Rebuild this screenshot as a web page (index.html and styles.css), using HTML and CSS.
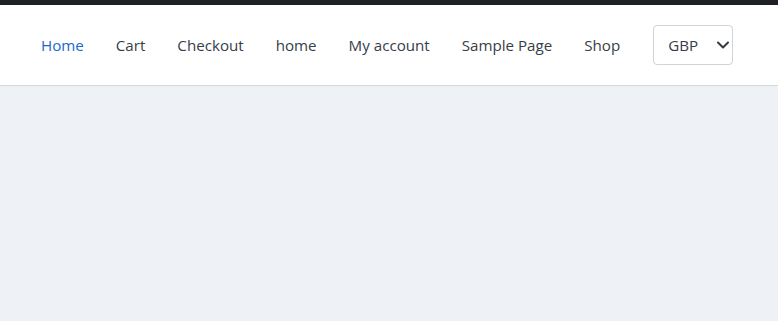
FILE: index.html
```html
<!DOCTYPE html>
<html>
<head>
<meta charset="utf-8">
<link rel="stylesheet" href="styles.css">
</head>
<body>
<div class="topbar"></div>
<header class="header">
  <nav class="nav">
    <a class="nav-link active" href="#">Home</a>
    <a class="nav-link" href="#">Cart</a>
    <a class="nav-link" href="#">Checkout</a>
    <a class="nav-link" href="#">home</a>
    <a class="nav-link" href="#">My account</a>
    <a class="nav-link" href="#">Sample Page</a>
    <a class="nav-link" href="#">Shop</a>
  </nav>
  <div class="currency">
    <span class="currency-value">GBP</span>
    <svg class="chevron" width="14" height="10" viewBox="0 0 14 10"><path d="M2 2.5 L7 7.5 L12 2.5" fill="none" stroke="#343a40" stroke-width="2" stroke-linecap="round" stroke-linejoin="round"/></svg>
  </div>
</header>
<main class="main"></main>
</body>
</html>
```
FILE: styles.css
```css
html, body { margin: 0; padding: 0; }
body {
  font-family: "Open Sans", "Noto Sans", sans-serif;
  background: #eef2f6;
  height: 321px;
  overflow: hidden;
}
.topbar { height: 5px; background: #1d2024; }
.header {
  height: 80px;
  background: #fff;
  border-bottom: 1px solid #d3d7db;
  display: flex;
  align-items: center;
  padding-left: 25px;
}
.nav { display: flex; align-items: center; }
.nav-link {
  padding: 0 16px;
  font-size: 15.15px;
  color: #373d48;
  text-decoration: none;
}
.nav-link.active { color: #1a6ac8; }
.currency {
  margin-left: 17px;
  width: 80px;
  height: 40px;
  box-sizing: border-box;
  border: 1px solid #ced4da;
  border-radius: 4px;
  display: flex;
  align-items: center;
  justify-content: space-between;
  padding: 0 2px 0 14px;
  font-size: 15.15px;
  color: #373d48;
}
.chevron { display: block; }
```
